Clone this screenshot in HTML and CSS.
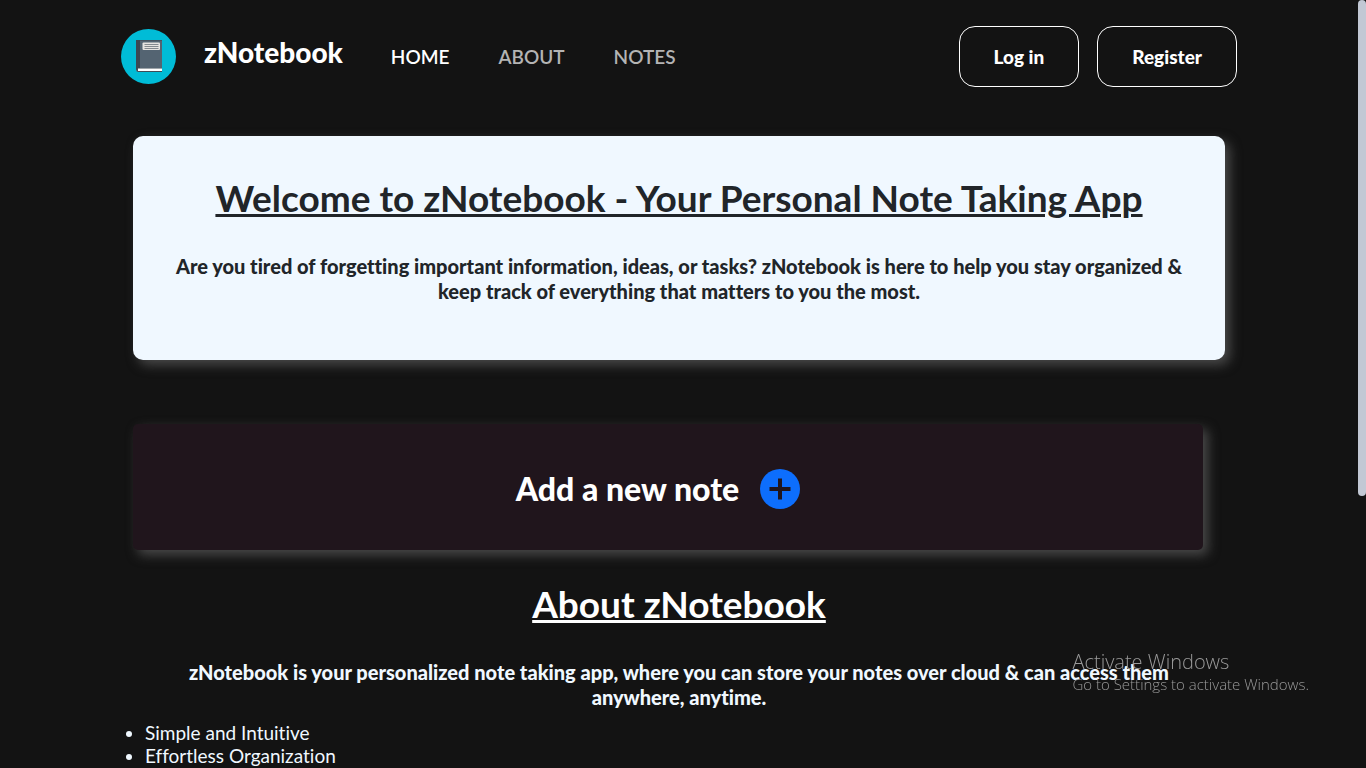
FILE: index.html
```html
<!DOCTYPE html>
<html lang="en">
<head>
<meta charset="utf-8">
<title>zNotebook</title>
<link rel="stylesheet" href="styles.css">
</head>
<body>
<header class="navbar container">
  <a class="logo" href="#" aria-label="zNotebook home">
    <svg viewBox="0 0 55 55" aria-hidden="true">
      <circle cx="27.500" cy="27.500" r="27.500" fill="#00bcd7"/>
      <path d="M15 11h26v32H17.500q-2.500 0-2.500-2.500z" fill="#546472"/>
      <path d="M15 11h26v1H15z" fill="#46535f"/>
      <path d="M15 11h4v29h-2l-2 1z" fill="#3b4854"/>
      <path d="M16 39h25v4H18q-2 0-2-2z" fill="#3f4c57"/>
      <path d="M17 39.500h24v2.500H17z" fill="#fff"/>
      <rect x="21.500" y="13.500" width="17.500" height="7.500" rx="1" fill="#e6e3e0"/>
      <path d="M23.500 15.500h14M23.500 17.500h14M23.500 19.500h14" stroke="#6b7278" stroke-width=".8"/>
    </svg>
  </a>
  <a class="brand" href="#">zNotebook</a>
  <nav class="links" aria-label="Main">
    <a class="link active" href="#">HOME</a>
    <a class="link" href="#about">ABOUT</a>
    <a class="link" href="#notes">NOTES</a>
  </nav>
  <div class="actions">
    <button class="btn" type="button">Log in</button>
    <button class="btn" type="button">Register</button>
  </div>
</header>
<main class="container">
  <section class="hero">
    <h1 class="title">Welcome to zNotebook - Your Personal Note Taking App</h1>
    <p class="lead">Are you tired of forgetting important information, ideas, or tasks? zNotebook is here to help you stay organized &amp; keep track of everything that matters to you the most.</p>
  </section>
  <section class="add-note" id="notes">
    <h2 class="add-title">Add a new note</h2>
    <button class="add-btn" type="button" aria-label="Add note">
      <svg viewBox="0 0 40 40" aria-hidden="true">
        <circle cx="20" cy="20" r="20" fill="#0d6efd"/>
        <path d="M20 9.500v21M9.500 20h21" stroke="#20151c" stroke-width="4"/>
      </svg>
    </button>
  </section>
  <section class="about" id="about">
    <h2 class="title">About zNotebook</h2>
    <p class="lead">zNotebook is your personalized note taking app, where you can store your notes over cloud &amp; can access them anywhere, anytime.</p>
    <ul class="features">
      <li>Simple and Intuitive</li>
      <li>Effortless Organization</li>
    </ul>
  </section>
</main>
<aside class="watermark">
  <p class="watermark-title">Activate Windows</p>
  <p class="watermark-text">Go to Settings to activate Windows.</p>
</aside>
<div class="scroll-thumb"></div>
</body>
</html>
```
FILE: styles.css
```css
* { box-sizing: border-box; }
body {
  margin: 0;
  padding-right: 8px;
  height: 100vh;
  overflow: hidden;
  background: #131313;
  color: #fff;
  font-family: Lato, "Open Sans", sans-serif;
  font-size: 19px;
  font-variant-ligatures: none;
}
h1, h2, p, ul { margin: 0; }
a { color: inherit; text-decoration: none; }
button { font: inherit; color: inherit; background: none; cursor: pointer; }
.container { width: 100%; max-width: 1140px; margin: 0 auto; padding: 0 12px; }
.navbar { display: flex; align-items: center; padding-top: 26px; }
.logo { width: 55px; height: 55px; }
.logo svg, .add-btn svg { display: block; width: 100%; height: 100%; }
.brand { margin-left: 28px; padding-bottom: 10px; font-size: 28px; line-height: 32px; font-weight: 900; }
.links { display: flex; gap: 49px; margin-left: 48px; }
.link { color: #b4b4b4; font-weight: 600; }
.link.active { color: #fff; }
.actions { display: flex; gap: 18px; margin-left: auto; }
.btn { height: 61px; padding: 0 34px; border: 1px solid #fff; border-radius: 16px; font-size: 19px; font-weight: 900; }
.hero {
  margin: 49px 12px 0;
  padding: 40px 24px 56px;
  border-radius: 10px;
  background: #f0f8ff;
  color: #212529;
  text-align: center;
  box-shadow: 5px 5px 12px #494949;
}
.title { font-size: 37px; line-height: 43px; font-weight: 700; text-decoration: underline; text-decoration-thickness: 3px; text-underline-offset: 2px; }
.lead { margin-top: 35px; font-size: 20px; line-height: 25px; font-weight: 900; }
.add-note {
  display: flex;
  justify-content: center;
  align-items: center;
  gap: 21px;
  min-height: 126px;
  margin: 64px 34px 0 12px;
  padding-right: 20px;
  padding-top: 4px;
  border-radius: 5px;
  background: #20151c;
  box-shadow: 5px 5px 12px #494949;
}
.add-title { font-size: 32px; line-height: 38px; font-weight: 900; }
.add-btn { width: 40px; height: 40px; padding: 0; border: 0; border-radius: 50%; }
.about { padding-top: 32px; text-align: center; color: #f0f8ff; }
.about .title { color: #fff; }
.about .lead { padding: 0 48px; }
.features { margin-top: 11px; padding-left: 24px; text-align: left; line-height: 23px; }
.watermark { position: fixed; right: 57px; bottom: 74px; color: #999; font-family: "Open Sans", "Noto Sans", sans-serif; pointer-events: none; }
.watermark-title { font-size: 20px; line-height: 25px; font-weight: 300; }
.watermark-text { font-size: 15px; line-height: 20px; font-weight: 300; }
.scroll-thumb { position: fixed; top: 0; right: 0; width: 8px; height: 496px; border-radius: 4px; background: #c2c8d4; }
```
